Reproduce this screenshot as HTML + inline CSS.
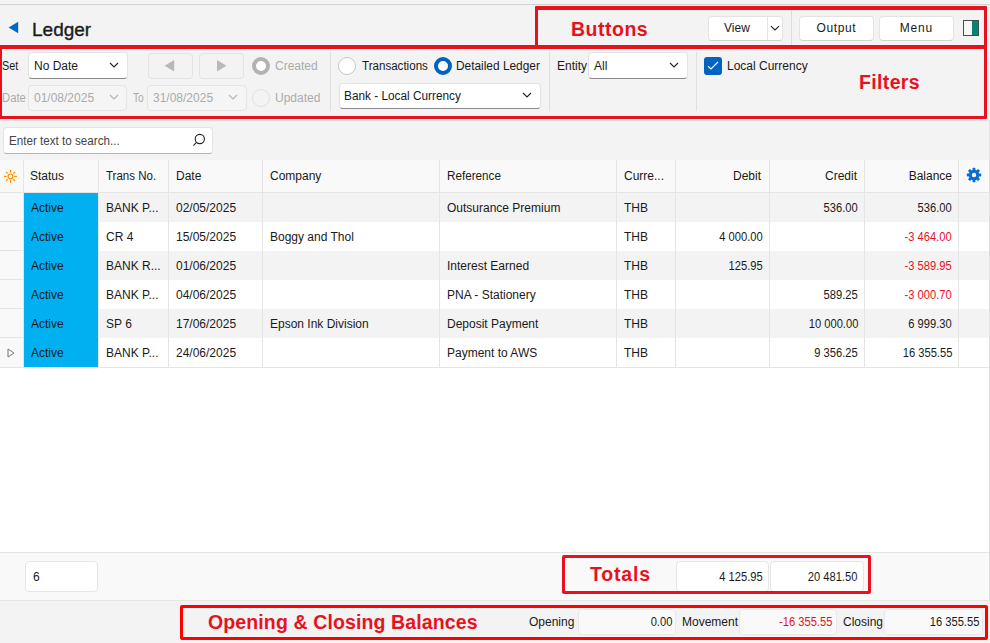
<!DOCTYPE html>
<html><head><meta charset="utf-8">
<style>
*{box-sizing:border-box;margin:0;padding:0}
html,body{width:990px;height:643px;overflow:hidden;background:#f3f3f3;font-family:"Liberation Sans",sans-serif;font-size:12px;color:#1a1a1a}
.a{position:absolute}
.t{position:absolute;white-space:nowrap;line-height:14px}
.red{position:absolute;border:3px solid #e8121f;border-radius:2px}
.rl{color:#e8121f;font-weight:bold;font-size:19.5px;line-height:20px}
.btn{position:absolute;background:#fff;border:1px solid #e3e3e3;border-bottom-color:#d0d0d0;border-radius:4px}
.dd{position:absolute;background:#fff;border:1px solid #e3e3e3;border-bottom-color:#8a8a8a;border-radius:4px}
.ddd{position:absolute;background:#f5f5f5;border:1px solid #e3e3e3;border-radius:4px}
.vsep{position:absolute;width:1px;background:#dcdcdc}
.dis{color:#ababab}
.hl{position:absolute;height:1px;background:#e5e5e5}
.vl{position:absolute;width:1px;background:#e5e5e5}
.row{position:absolute;left:24px;width:965px;height:29px}
.cell{position:absolute;white-space:nowrap;line-height:14px;top:7px}
.r{text-align:right}
.neg{color:#e81123}
.n{transform:scaleX(.93);transform-origin:100% 50%}
</style></head><body>
<!-- top line -->
<div class="a" style="left:0;top:4px;width:990px;height:1px;background:#d2d2d2"></div>
<!-- back arrow -->
<svg class="a" style="left:0;top:0" width="30" height="40" viewBox="0 0 30 40"><polygon points="8.6,27.5 18.2,21.8 18.2,33.2" fill="#0067c4"/></svg>
<div class="t" style="left:32px;top:20px;font-size:19px;line-height:20px;color:#1b1b1b;-webkit-text-stroke:.35px #1b1b1b">Ledger</div>

<!-- Buttons area -->
<div class="vsep" style="left:791px;top:10px;height:35px"></div>
<div class="btn" style="left:708px;top:16px;width:75px;height:25px"></div>
<div class="vl" style="left:767px;top:17px;height:23px;background:#e3e3e3"></div>
<div class="t" style="left:724px;top:21px">View</div>
<svg class="a" style="left:770px;top:25px" width="10" height="7" viewBox="0 0 10 7"><polyline points="1,1.2 5,4.9 9,1.2" fill="none" stroke="#222" stroke-width="1.1"/></svg>
<div class="btn" style="left:799px;top:16px;width:75px;height:25px"></div>
<div class="t" style="left:799px;top:21px;width:74px;text-align:center;letter-spacing:.6px;text-indent:.6px">Output</div>
<div class="btn" style="left:879px;top:16px;width:75px;height:25px"></div>
<div class="t" style="left:879px;top:21px;width:74px;text-align:center;letter-spacing:.8px;text-indent:.8px">Menu</div>
<div class="a" style="left:963px;top:20px;width:16px;height:16px;border:1px solid #474c50;background:linear-gradient(90deg,#f7f7f7 0 57%,#088371 57% 100%)"></div>

<!-- Filters -->
<div class="t" style="left:2px;top:59px;transform:scaleX(.9);transform-origin:0 0">Set</div>
<div class="dd" style="left:28px;top:52px;width:100px;height:27px"></div>
<div class="t" style="left:34px;top:59px">No Date</div>
<svg class="a" style="left:109px;top:62px" width="10" height="7" viewBox="0 0 10 7"><polyline points="1,1 5,5 9,1" fill="none" stroke="#222" stroke-width="1.1"/></svg>

<div class="t dis" style="left:2px;top:91px;transform:scaleX(.94);transform-origin:0 0">Date</div>
<div class="ddd" style="left:28px;top:85px;width:99px;height:26px"></div>
<div class="t dis" style="left:34px;top:91px">01/08/2025</div>
<svg class="a" style="left:109px;top:94px" width="10" height="7" viewBox="0 0 10 7"><polyline points="1,1 5,5 9,1" fill="none" stroke="#b5b5b5" stroke-width="1.2"/></svg>

<div class="ddd" style="left:148px;top:53px;width:45px;height:26px;background:#f3f3f3"></div>
<svg class="a" style="left:164px;top:60px" width="11" height="12" viewBox="0 0 11 12"><polygon points="0.6,5.8 10.2,0 10.2,11.4" fill="#b8b8b8"/></svg>
<div class="ddd" style="left:199px;top:53px;width:45px;height:26px;background:#f3f3f3"></div>
<svg class="a" style="left:216px;top:60px" width="11" height="12" viewBox="0 0 11 12"><polygon points="10.4,5.8 1,0 1,11.4" fill="#b8b8b8"/></svg>

<div class="a" style="left:252px;top:57px;width:18px;height:18px;border-radius:50%;border:4px solid #b3b3b3;background:#fff"></div>
<div class="t dis" style="left:275px;top:59px">Created</div>
<div class="t dis" style="left:133px;top:91px;transform:scaleX(.85);transform-origin:0 0">To</div>
<div class="ddd" style="left:147px;top:85px;width:100px;height:26px"></div>
<div class="t dis" style="left:153px;top:91px">31/08/2025</div>
<svg class="a" style="left:228px;top:94px" width="10" height="7" viewBox="0 0 10 7"><polyline points="1,1 5,5 9,1" fill="none" stroke="#b5b5b5" stroke-width="1.2"/></svg>
<div class="a" style="left:252px;top:89px;width:18px;height:18px;border-radius:50%;border:1px solid #e0e0e0;background:#f3f3f3"></div>
<div class="t dis" style="left:275px;top:91px">Updated</div>

<div class="vsep" style="left:330px;top:52px;height:59px;background:#e0e0e0"></div>
<div class="a" style="left:338px;top:57px;width:18px;height:18px;border-radius:50%;border:1px solid #c6c6c6;background:#fff"></div>
<div class="t" style="left:362px;top:59px;transform:scaleX(.965);transform-origin:0 0">Transactions</div>
<div class="a" style="left:434px;top:57px;width:18px;height:18px;border-radius:50%;border:4.5px solid #0063c1;background:#fff"></div>
<div class="t" style="left:456px;top:59px;transform:scaleX(.99);transform-origin:0 0">Detailed Ledger</div>
<div class="dd" style="left:339px;top:83px;width:202px;height:26px"></div>
<div class="t" style="left:344px;top:89px;transform:scaleX(.985);transform-origin:0 0">Bank - Local Currency</div>
<svg class="a" style="left:522px;top:92px" width="10" height="7" viewBox="0 0 10 7"><polyline points="1,1 5,5 9,1" fill="none" stroke="#222" stroke-width="1.1"/></svg>

<div class="vsep" style="left:549px;top:52px;height:59px;background:#e0e0e0"></div>
<div class="t" style="left:557px;top:59px">Entity</div>
<div class="dd" style="left:588px;top:52px;width:100px;height:27px"></div>
<div class="t" style="left:594px;top:59px">All</div>
<svg class="a" style="left:669px;top:62px" width="10" height="7" viewBox="0 0 10 7"><polyline points="1,1 5,5 9,1" fill="none" stroke="#222" stroke-width="1.1"/></svg>

<div class="vsep" style="left:696px;top:52px;height:59px;background:#e0e0e0"></div>
<div class="a" style="left:704px;top:57px;width:18px;height:18px;border-radius:3px;background:#0063c1"></div>
<svg class="a" style="left:704px;top:57px" width="18" height="18" viewBox="0 0 18 18"><polyline points="4,9.3 7,12 14,5" fill="none" stroke="#fff" stroke-width="1.15"/></svg>
<div class="t" style="left:727px;top:59px">Local Currency</div>

<!-- faint line under filters -->
<div class="a" style="left:0;top:120px;width:990px;height:1px;background:#e8e8e8"></div>

<!-- Search -->
<div class="btn" style="left:3px;top:127px;width:210px;height:27px;border-bottom-color:#b4b4b4"></div>
<div class="t" style="left:9px;top:134px;color:#444;transform:scaleX(.97);transform-origin:0 50%">Enter text to search...</div>
<svg class="a" style="left:191px;top:133px" width="15" height="15" viewBox="0 0 15 15"><circle cx="8.8" cy="6" r="4.6" fill="none" stroke="#222" stroke-width="1.1"/><line x1="5.5" y1="9.4" x2="2.4" y2="12.6" stroke="#333" stroke-width="1.3"/></svg>

<!-- Grid -->
<div class="a" style="left:0;top:160px;width:990px;height:392px;background:#fff"></div>
<div class="a" style="left:0;top:160px;width:989px;height:32px;background:#f9f9f9"></div>
<div class="a" style="left:0;top:193px;width:23px;height:174px;background:#f9f9f9"></div>
<div class="row" style="top:193px;background:#f3f3f3"></div>
<div class="row" style="top:251px;background:#f3f3f3"></div>
<div class="row" style="top:309px;background:#f3f3f3"></div>
<div class="a" style="left:24px;top:193px;width:74px;height:174px;background:#01b0f0"></div>

<div class="hl" style="left:0;top:192px;width:989px"></div>
<div class="hl" style="left:0;top:221px;width:23px"></div>
<div class="hl" style="left:0;top:250px;width:23px"></div>
<div class="hl" style="left:0;top:279px;width:23px"></div>
<div class="hl" style="left:0;top:308px;width:23px"></div>
<div class="hl" style="left:0;top:337px;width:23px"></div>
<div class="hl" style="left:0;top:367px;width:989px"></div>
<div class="vl" style="left:989px;top:120px;height:481px;background:#e0e0e0;z-index:2"></div>
<div class="vl" style="left:23px;top:160px;height:207px"></div>
<div class="vl" style="left:98px;top:160px;height:207px"></div>
<div class="vl" style="left:168px;top:160px;height:207px"></div>
<div class="vl" style="left:262px;top:160px;height:207px"></div>
<div class="vl" style="left:439px;top:160px;height:207px"></div>
<div class="vl" style="left:616px;top:160px;height:207px"></div>
<div class="vl" style="left:675px;top:160px;height:207px"></div>
<div class="vl" style="left:769px;top:160px;height:207px"></div>
<div class="vl" style="left:864px;top:160px;height:207px"></div>
<div class="vl" style="left:958px;top:160px;height:207px"></div>

<!-- header -->
<svg class="a" style="left:0;top:160px" width="23" height="32" viewBox="0 0 23 32"><g stroke="#ff8c00" stroke-width="1.2" fill="none"><circle cx="10.5" cy="16.4" r="2.4"/><line x1="14.30" y1="16.40" x2="17.00" y2="16.40"/><line x1="13.33" y1="19.23" x2="14.95" y2="20.85"/><line x1="10.50" y1="20.20" x2="10.50" y2="22.90"/><line x1="7.67" y1="19.23" x2="6.05" y2="20.85"/><line x1="6.70" y1="16.40" x2="4.00" y2="16.40"/><line x1="7.67" y1="13.57" x2="6.05" y2="11.95"/><line x1="10.50" y1="12.60" x2="10.50" y2="9.90"/><line x1="13.33" y1="13.57" x2="14.95" y2="11.95"/></g></svg>
<div class="t" style="left:30px;top:169px">Status</div>
<div class="t" style="left:106px;top:169px;transform:scaleX(.96);transform-origin:0 0">Trans No.</div>
<div class="t" style="left:176px;top:169px">Date</div>
<div class="t" style="left:270px;top:169px">Company</div>
<div class="t" style="left:447px;top:169px;transform:scaleX(.975);transform-origin:0 0">Reference</div>
<div class="t" style="left:624px;top:169px">Curre...</div>
<div class="t r" style="left:676px;top:169px;width:85px">Debit</div>
<div class="t r" style="left:770px;top:169px;width:87px">Credit</div>
<div class="t r" style="left:865px;top:169px;width:87px">Balance</div>
<svg class="a" style="left:966px;top:167px" width="16" height="16" viewBox="0 0 16 16"><g fill="#0a6cd0"><circle cx="8" cy="8" r="5.2"/><rect x="6.6" y="0.8" width="2.8" height="14.4" rx="0.6"/><rect x="0.8" y="6.6" width="14.4" height="2.8" rx="0.6"/><rect x="6.6" y="0.8" width="2.8" height="14.4" rx="0.6" transform="rotate(45 8 8)"/><rect x="6.6" y="0.8" width="2.8" height="14.4" rx="0.6" transform="rotate(-45 8 8)"/></g><circle cx="8" cy="8" r="2.2" fill="#f9f9f9"/></svg>

<!-- rows -->
<div class="t" style="left:31px;top:201px">Active</div>
<div class="t" style="left:106px;top:201px">BANK P...</div>
<div class="t" style="left:176px;top:201px">02/05/2025</div>
<div class="t" style="left:447px;top:201px">Outsurance Premium</div>
<div class="t" style="left:624px;top:201px">THB</div>
<div class="t n" style="right:132px;top:201px">536.00</div>
<div class="t n" style="right:38px;top:201px">536.00</div>
<div class="t" style="left:31px;top:230px">Active</div>
<div class="t" style="left:106px;top:230px">CR 4</div>
<div class="t" style="left:176px;top:230px">15/05/2025</div>
<div class="t" style="left:270px;top:230px">Boggy and Thol</div>
<div class="t" style="left:624px;top:230px">THB</div>
<div class="t n" style="right:227px;top:230px">4 000.00</div>
<div class="t n neg" style="right:38px;top:230px">-3 464.00</div>
<div class="t" style="left:31px;top:259px">Active</div>
<div class="t" style="left:106px;top:259px">BANK R...</div>
<div class="t" style="left:176px;top:259px">01/06/2025</div>
<div class="t" style="left:447px;top:259px">Interest Earned</div>
<div class="t" style="left:624px;top:259px">THB</div>
<div class="t n" style="right:227px;top:259px">125.95</div>
<div class="t n neg" style="right:38px;top:259px">-3 589.95</div>
<div class="t" style="left:31px;top:288px">Active</div>
<div class="t" style="left:106px;top:288px">BANK P...</div>
<div class="t" style="left:176px;top:288px">04/06/2025</div>
<div class="t" style="left:447px;top:288px">PNA - Stationery</div>
<div class="t" style="left:624px;top:288px">THB</div>
<div class="t n" style="right:132px;top:288px">589.25</div>
<div class="t n neg" style="right:38px;top:288px">-3 000.70</div>
<div class="t" style="left:31px;top:317px">Active</div>
<div class="t" style="left:106px;top:317px">SP 6</div>
<div class="t" style="left:176px;top:317px">17/06/2025</div>
<div class="t" style="left:270px;top:317px">Epson Ink Division</div>
<div class="t" style="left:447px;top:317px">Deposit Payment</div>
<div class="t" style="left:624px;top:317px">THB</div>
<div class="t n" style="right:132px;top:317px">10 000.00</div>
<div class="t n" style="right:38px;top:317px">6 999.30</div>
<div class="t" style="left:31px;top:346px">Active</div>
<div class="t" style="left:106px;top:346px">BANK P...</div>
<div class="t" style="left:176px;top:346px">24/06/2025</div>
<div class="t" style="left:447px;top:346px">Payment to AWS</div>
<div class="t" style="left:624px;top:346px">THB</div>
<div class="t n" style="right:132px;top:346px">9 356.25</div>
<div class="t n" style="right:38px;top:346px">16 355.55</div>
<svg class="a" style="left:7px;top:348px" width="8" height="10" viewBox="0 0 8 10"><polygon points="1,1 7,5 1,9" fill="none" stroke="#777" stroke-width="1"/></svg>
<!-- footer -->
<div class="a" style="left:0;top:552px;width:990px;height:49px;background:#f9f9f9;border-top:1px solid #e5e5e5;border-bottom:1px solid #e5e5e5"></div>
<div class="a" style="left:25px;top:561px;width:73px;height:31px;background:#fff;border:1px solid #e6e6e6;border-radius:4px"></div>
<div class="t" style="left:33px;top:570px">6</div>
<div class="a" style="left:676px;top:561px;width:93px;height:31px;background:#fff;border:1px solid #e6e6e6;border-radius:4px"></div>
<div class="t n" style="right:227px;top:570px">4 125.95</div>
<div class="a" style="left:770px;top:561px;width:94px;height:31px;background:#fff;border:1px solid #e6e6e6;border-radius:4px"></div>
<div class="t n" style="right:133px;top:570px">20 481.50</div>

<!-- balances -->
<div class="t" style="left:529px;top:615px">Opening</div>
<div class="a" style="left:578px;top:609px;width:98px;height:26px;background:#f9f9f9;border:1px solid #e9e9e9;border-radius:4px"></div>
<div class="t n" style="right:318px;top:615px">0.00</div>
<div class="t" style="left:682px;top:615px">Movement</div>
<div class="a" style="left:739px;top:609px;width:98px;height:26px;background:#f9f9f9;border:1px solid #e9e9e9;border-radius:4px"></div>
<div class="t n neg" style="right:158px;top:615px">-16 355.55</div>
<div class="t" style="left:843px;top:615px">Closing</div>
<div class="a" style="left:884px;top:609px;width:99px;height:26px;background:#f9f9f9;border:1px solid #e9e9e9;border-radius:4px"></div>
<div class="t n" style="right:11px;top:615px">16 355.55</div>

<!-- red annotation boxes -->
<div class="red" style="left:535px;top:6px;width:452px;height:43px;border-radius:1px;border-width:4px 3px 4px 3px"></div>
<div class="red" style="left:-1px;top:45px;width:988px;height:74px;border-radius:1px;border-top-width:4px"></div>
<div class="red" style="left:562px;top:555px;width:309px;height:39px"></div>
<div class="red" style="left:180px;top:605px;width:808px;height:35px;border-color:#ff0000"></div>
<div class="t rl" style="left:571px;top:19px;letter-spacing:.5px">Buttons</div>
<div class="t rl" style="left:859px;top:72px;letter-spacing:.35px">Filters</div>
<div class="t rl" style="left:590px;top:564px;letter-spacing:.8px">Totals</div>
<div class="t rl" style="left:208px;top:612px;letter-spacing:.12px">Opening &amp; Closing Balances</div>
</body></html>
